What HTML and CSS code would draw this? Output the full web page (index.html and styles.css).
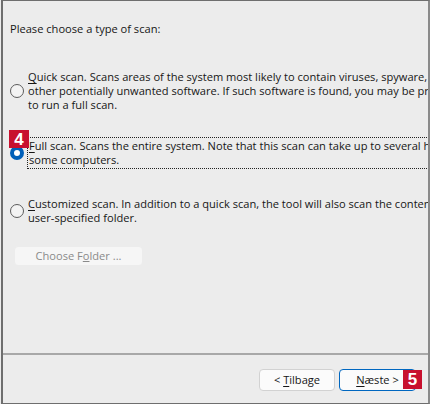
FILE: index.html
```html
<!DOCTYPE html>
<html>
<head>
<meta charset="utf-8">
<link rel="stylesheet" href="styles.css">
</head>
<body>
<div class="window">
  <div class="main">
    <p class="heading">Please choose a type of scan:</p>
    <div class="option opt-quick">
      <span class="radio"></span>
      <div class="label"><u>Q</u>uick scan. Scans areas of the system most likely to contain viruses, spyware, and<br>other potentially unwanted software. If such software is found, you may be prompted<br>to run a full scan.</div>
    </div>
    <div class="option opt-full">
      <span class="radio checked"></span>
      <span class="badge badge-4">4</span>
      <div class="label focus"><u>F</u>ull scan. Scans the entire system. Note that this scan can take up to several hours on<br>some computers.</div>
    </div>
    <div class="option opt-custom">
      <span class="radio"></span>
      <div class="label"><u>C</u>ustomized scan. In addition to a quick scan, the tool will also scan the contents of a<br>user-specified folder.</div>
    </div>
    <button class="btn btn-folder" disabled>Choose F<u>o</u>lder ...</button>
  </div>
  <div class="footer">
    <button class="btn btn-nav"><span>&lt; <u>T</u>ilbage</span></button>
    <div class="next-wrap">
      <button class="btn btn-nav btn-default"><span><u>N</u>æste &gt;</span></button>
      <span class="badge badge-5">5</span>
    </div>
  </div>
</div>
</body>
</html>
```
FILE: styles.css
```css
* { box-sizing: border-box; }
html, body {
  margin: 0;
  padding: 0;
  background: #ececec;
}
body {
  width: 430px;
  height: 404px;
  overflow: hidden;
  font-family: "Open Sans", "Noto Sans", sans-serif;
  font-size: 11.1px;
  line-height: 14px;
  color: #161616;
}
.window {
  width: 430px;
  height: 404px;
  border-top: 1px solid #6e6e6e;
  border-left: 2px solid #6e6e6e;
  border-right: 3px solid #8a8a8a;
  border-bottom: 1px solid #6e6e6e;
  margin-left: 1px;
  display: flex;
  flex-direction: column;
  overflow: hidden;
  background: #ececec;
}
.main {
  height: 354px;
  padding: 21px 0 0 7px;
  overflow: hidden;
  border-bottom: 2px solid #a8a8a8;
}
.heading {
  margin: 0 0 34px 0;
  white-space: nowrap;
}
.option {
  position: relative;
  display: flex;
  align-items: center;
  white-space: nowrap;
}
.radio {
  flex: none;
  width: 14px;
  height: 14px;
  border-radius: 50%;
  border: 1px solid #5c5c5c;
  background: #f3f3f3;
  margin-right: 4px;
}
.radio.checked {
  border: 4px solid #005fb8;
  background: #ffffff;
}
.label u { text-decoration-thickness: 1px; text-underline-offset: 2px; }
.opt-full { margin-top: 25px; }
.opt-full .label.focus {
  border: 1px dotted #222;
  padding: 1px 0 1px 1px;
  margin-left: -1px;
  flex: 1;
}
.opt-custom { margin-top: 28px; }
.btn {
  font-family: inherit;
  font-size: 11.1px;
  line-height: 14px;
  border-radius: 4px;
  padding: 0;
}
.btn-folder {
  margin-top: 21px;
  margin-left: 4px;
  width: 129px;
  height: 20px;
  background: #f6f6f6;
  border: 1px solid #ececec;
  color: #8a8a8a;
}
.footer {
  flex: 1;
  display: flex;
  justify-content: flex-end;
  align-items: flex-start;
  gap: 4px;
  padding: 14px 12px 0 0;
}
.btn-nav {
  width: 76px;
  height: 22px;
  background: #fbfbfb;
  border: 1px solid #d2d2d2;
  color: #161616;
}
.btn-default {
  width: 77px;
  border: 1px solid #0067c0;
}
.btn-nav u { text-underline-offset: 2px; }
.next-wrap { position: relative; }
.badge {
  position: absolute;
  background: #c8102e;
  color: #fff;
  font-family: "Liberation Sans", Arial, sans-serif;
  font-weight: bold;
  font-size: 17px;
  line-height: 19px;
  text-align: center;
}
.badge-4 {
  left: -1px;
  top: -7px;
  width: 20px;
  height: 18px;
}
.badge-5 {
  right: -6px;
  top: 1px;
  width: 19px;
  height: 19px;
}
```
